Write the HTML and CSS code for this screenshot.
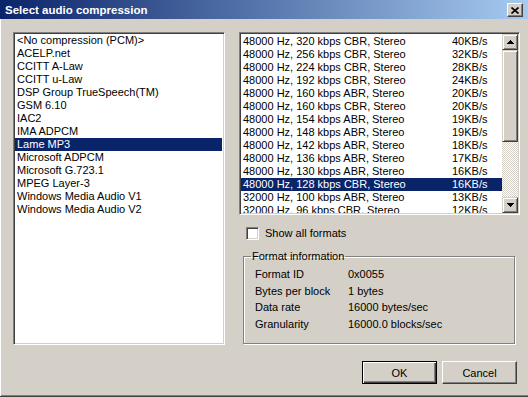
FILE: index.html
```html
<!DOCTYPE html>
<html lang="en">

<head>
    <meta charset="utf-8">
    <title>Select audio compression</title>
    <link rel="stylesheet" href="styles.css">
</head>

<body>

    <div class="window">
        <div class="titlebar">
            <span class="title">Select audio compression</span>
            <button class="close">
                <svg width="8" height="7" viewBox="0 0 8 7">
                    <path d="M0.5 0.5 L7.5 6.5 M7.5 0.5 L0.5 6.5" stroke="#000" stroke-width="1.6" fill="none"/>
                </svg>
            </button>
        </div>

        <div class="content">
            <ul class="listbox codecs">
                <li>&lt;No compression (PCM)&gt;</li>
                <li>ACELP.net</li>
                <li>CCITT A-Law</li>
                <li>CCITT u-Law</li>
                <li>DSP Group TrueSpeech(TM)</li>
                <li>GSM 6.10</li>
                <li>IAC2</li>
                <li>IMA ADPCM</li>
                <li class="valgt">Lame MP3</li>
                <li>Microsoft ADPCM</li>
                <li>Microsoft G.723.1</li>
                <li>MPEG Layer-3</li>
                <li>Windows Media Audio V1</li>
                <li>Windows Media Audio V2</li>
            </ul>

            <div class="right">
                <div class="listbox formats">
                    <ul class="rows">
                        <li><span>48000 Hz, 320 kbps CBR, Stereo</span><span>40KB/s</span></li>
                        <li><span>48000 Hz, 256 kbps CBR, Stereo</span><span>32KB/s</span></li>
                        <li><span>48000 Hz, 224 kbps CBR, Stereo</span><span>28KB/s</span></li>
                        <li><span>48000 Hz, 192 kbps CBR, Stereo</span><span>24KB/s</span></li>
                        <li><span>48000 Hz, 160 kbps ABR, Stereo</span><span>20KB/s</span></li>
                        <li><span>48000 Hz, 160 kbps CBR, Stereo</span><span>20KB/s</span></li>
                        <li><span>48000 Hz, 154 kbps ABR, Stereo</span><span>19KB/s</span></li>
                        <li><span>48000 Hz, 148 kbps ABR, Stereo</span><span>19KB/s</span></li>
                        <li><span>48000 Hz, 142 kbps ABR, Stereo</span><span>18KB/s</span></li>
                        <li><span>48000 Hz, 136 kbps ABR, Stereo</span><span>17KB/s</span></li>
                        <li><span>48000 Hz, 130 kbps ABR, Stereo</span><span>16KB/s</span></li>
                        <li class="valgt"><span>48000 Hz, 128 kbps CBR, Stereo</span><span>16KB/s</span></li>
                        <li><span>32000 Hz, 100 kbps ABR, Stereo</span><span>13KB/s</span></li>
                        <li><span>32000 Hz, 96 kbps CBR, Stereo</span><span>12KB/s</span></li>
                    </ul>
                    <div class="scrollbar">
                        <div class="arrow">
                            <svg width="7" height="4" viewBox="0 0 7 4" shape-rendering="crispEdges">
                                <path d="M3 0h1v1h1v1h1v1h1v1H0V3h1V2h1V1h1z" fill="#000"/>
                            </svg>
                        </div>
                        <div class="thumb"></div>
                        <div class="track"></div>
                        <div class="arrow">
                            <svg width="7" height="4" viewBox="0 0 7 4" shape-rendering="crispEdges">
                                <path d="M0 0h7v1H6v1H5v1H4v1H3V3H2V2H1V1H0z" fill="#000"/>
                            </svg>
                        </div>
                    </div>
                </div>

                <label class="check"><span class="box"></span>Show all formats</label>

                <fieldset class="info">
                    <legend>Format information</legend>
                    <dl>
                        <dt>Format ID</dt><dd>0x0055</dd>
                        <dt>Bytes per block</dt><dd>1 bytes</dd>
                        <dt>Data rate</dt><dd>16000 bytes/sec</dd>
                        <dt>Granularity</dt><dd>16000.0 blocks/sec</dd>
                    </dl>
                </fieldset>
            </div>

            <div class="buttons">
                <button class="knap standard">OK</button>
                <button class="knap">Cancel</button>
            </div>
        </div>
    </div>

</body>

</html>
```

FILE: styles.css
```css
body {
    margin: 0;
    padding: 0;
    background-color: #d4d0c8;
    font-family: "Liberation Sans", Arial, sans-serif;
    font-size: 11px;
    color: #000;
}

.window {
    width: 528px;
    height: 397px;
    box-sizing: border-box;
    background-color: #d4d0c8;
    border-bottom: 1px solid #404040;
    box-shadow: inset 1px 0 0 #fff, inset 0 -1px 0 #808080;
}

.titlebar {
    height: 19px;
    display: flex;
    align-items: center;
    justify-content: space-between;
    padding: 0 5px 0 5px;
    background: linear-gradient(to right, #0a246a, #a6caf0);
}

.title {
    color: #fff;
    font-weight: bold;
    font-size: 11.5px;
}

.close {
    width: 16px;
    height: 14px;
    padding: 0;
    margin-top: 1px;
    display: flex;
    align-items: center;
    justify-content: center;
    background-color: #d4d0c8;
    border: 1px solid;
    border-color: #fff #404040 #404040 #fff;
    box-shadow: inset -1px -1px 0 #808080;
}

.content {
    display: grid;
    grid-template-columns: 212px 281px;
    column-gap: 14px;
    padding: 13px 0 0 13px;
}

ul {
    list-style: none;
    margin: 0;
    padding: 0;
}

.listbox {
    box-sizing: border-box;
    background-color: #fff;
    border: 1px solid;
    border-color: #808080 #fff #fff #808080;
    box-shadow: inset 1px 1px 0 #404040, inset -1px -1px 0 #d4d0c8;
}

.codecs {
    height: 313px;
    padding: 1px 2px 0 1px;
}

.codecs li {
    line-height: 13px;
    padding-left: 2px;
    white-space: nowrap;
}

.valgt {
    background-color: #0a246a;
    color: #fff;
}

.formats {
    height: 183px;
    display: flex;
    padding: 1px;
}

.rows {
    flex: 1;
    overflow: hidden;
    padding-top: 1px;
}

.rows li {
    display: grid;
    grid-template-columns: 209px auto;
    line-height: 13px;
    padding-left: 2px;
    white-space: nowrap;
}

.scrollbar {
    width: 16px;
    display: flex;
    flex-direction: column;
}

.arrow,
.thumb {
    box-sizing: border-box;
    background-color: #d4d0c8;
    border: 1px solid;
    border-color: #d4d0c8 #404040 #404040 #d4d0c8;
    box-shadow: inset 1px 1px 0 #fff, inset -1px -1px 0 #808080;
}

.arrow {
    height: 16px;
    display: flex;
    align-items: center;
    justify-content: center;
}

.thumb {
    height: 92px;
}

.track {
    flex: 1;
    background-color: #d4d0c8;
    background-image: repeating-conic-gradient(#fff 0 25%, #d4d0c8 0 50%);
    background-size: 2px 2px;
}

.check {
    display: flex;
    align-items: center;
    gap: 6px;
    margin: 12px 0 0 7px;
    line-height: 13px;
}

.box {
    width: 13px;
    height: 13px;
    box-sizing: border-box;
    background-color: #fff;
    border: 1px solid;
    border-color: #808080 #fff #fff #808080;
    box-shadow: inset 1px 1px 0 #404040, inset -1px -1px 0 #d4d0c8;
}

.info {
    margin: 10px 5px 0 4px;
    padding: 0 0 10px 7px;
    border: 1px solid #808080;
    box-shadow: 1px 1px 0 #fff, inset 1px 1px 0 #fff;
}

.info legend {
    padding: 0 1px;
    line-height: 13px;
}

.info dl {
    display: grid;
    grid-template-columns: 93px auto;
    margin: 3px 0 0 4px;
    line-height: 16.7px;
}

.info dd {
    margin: 0;
}

.buttons {
    grid-column: 1 / -1;
    display: flex;
    justify-content: flex-end;
    gap: 5px;
    margin: 16px 3px 0 0;
}

.knap {
    width: 75px;
    height: 23px;
    padding: 0;
    font-family: inherit;
    font-size: 11px;
    color: #000;
    background-color: #d4d0c8;
    border: 1px solid;
    border-color: #fff #404040 #404040 #fff;
    box-shadow: inset -1px -1px 0 #808080;
}

.standard {
    border: 1px solid #000;
    box-shadow: inset 1px 1px 0 #fff, inset -1px -1px 0 #404040, inset -2px -2px 0 #808080;
}
```
